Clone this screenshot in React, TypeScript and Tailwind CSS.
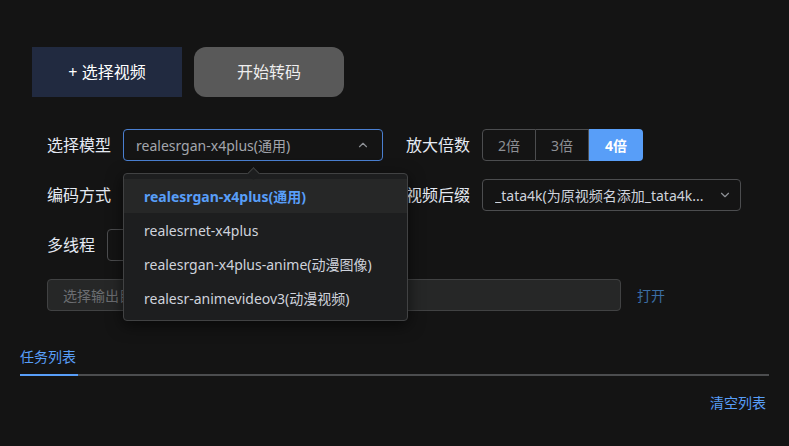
import React from 'react';
import { ChevronUp, ChevronDown } from 'lucide-react';

const font = { fontFamily: '"Noto Sans", "Noto Sans CJK SC", sans-serif' };

const models = [
  'realesrgan-x4plus(通用)',
  'realesrnet-x4plus',
  'realesrgan-x4plus-anime(动漫图像)',
  'realesr-animevideov3(动漫视频)',
];

function Label({ children }: { children: React.ReactNode }) {
  return <span className="mr-3 text-[16px] leading-8 text-[#e5eaf3] whitespace-nowrap">{children}</span>;
}

export default function App() {
  return (
    <div className="relative h-[446px] w-full overflow-hidden bg-[#141414]" style={font}>
      <div className="flex gap-3 pl-8 pt-[47px]">
        <button className="h-[50px] w-[150px] bg-[#212a40] text-[16px] text-white">+ 选择视频</button>
        <button className="h-[50px] w-[150px] rounded-xl bg-[#595959] text-[16px] text-[#eeeeee]">开始转码</button>
      </div>

      <div className="relative mt-8 flex flex-col gap-[18px] pl-[47px]">
        {/* row 1 */}
        <div className="flex items-center">
          <Label>选择模型</Label>
          <div className="flex h-8 w-[260px] items-center justify-between rounded border border-[#4a7fd0] px-3 text-[14px] text-[#a3a6ad]">
            <span>realesrgan-x4plus(通用)</span>
            <ChevronUp className="h-[14px] w-[14px] text-[#8d9095]" />
          </div>
          <span className="ml-[23px]"><Label>放大倍数</Label></span>
          <div className="flex h-8 text-[14px]">
            <span className="flex w-[54px] items-center justify-center rounded-l border border-[#4c4d4f] text-[#8d9095]">2倍</span>
            <span className="flex w-[53px] items-center justify-center border-y border-r border-[#4c4d4f] text-[#8d9095]">3倍</span>
            <span className="flex w-[54px] items-center justify-center rounded-r bg-[#589ef8] font-bold text-white">4倍</span>
          </div>
        </div>

        {/* row 2 */}
        <div className="flex items-center">
          <Label>编码方式</Label>
          <div className="flex h-8 w-[260px] items-center justify-end rounded border border-[#4c4d4f] px-3">
            <ChevronDown className="h-[14px] w-[14px] text-[#8d9095]" />
          </div>
          <span className="ml-[23px]"><Label>视频后缀</Label></span>
          <div className="flex h-8 w-[259px] items-center justify-between rounded border border-[#4c4d4f] pl-3 pr-[8px] text-[14px] text-[#cfd3dc]">
            <span className="truncate">_tata4k(为原视频名添加_tata4k...</span>
            <ChevronDown className="ml-3 h-[14px] w-[14px] shrink-0 text-[#8d9095]" />
          </div>
        </div>

        {/* row 3 */}
        <div className="flex items-center">
          <Label>多线程</Label>
          <div className="flex h-8 w-[150px] items-center rounded border border-[#4c4d4f] px-3" />
        </div>

        {/* row 4 */}
        <div className="flex items-center">
          <div className="flex h-8 w-[574px] items-center rounded border border-[#414243] bg-[#262727] px-[15px] text-[14px] text-[#6c6e72]">
            选择输出目录...
          </div>
          <span className="ml-4 text-[14px] text-[#3b6ea5]">打开</span>
        </div>

        {/* model dropdown */}
        <div className="absolute left-[123px] top-[44px] w-[285px] rounded border border-[#414243] bg-[#1d1e1f] py-[5px] shadow-[0_4px_16px_rgba(0,0,0,0.6)]">
          <div className="absolute -top-[5px] left-[125px] h-[9px] w-[9px] rotate-45 border-l border-t border-[#414243] bg-[#1d1e1f]" />
          {models.map((m, i) => (
            <div
              key={m}
              className={
                'flex h-[34px] items-center px-5 text-[14px] ' +
                (i === 0 ? 'bg-[#262727] font-bold text-[#589ef8]' : 'text-[#cfd3dc]')
              }
            >
              {m}
            </div>
          ))}
        </div>
      </div>

      <div className="mx-5 mt-[36px]">
        <div className="flex">
          <div className="flex flex-col">
            <span className="text-[14px] leading-5 text-[#589ef8]">任务列表</span>
            <div className="mt-[7px] h-[2px] w-[58px] bg-[#589ef8]" />
          </div>
          <div className="mt-auto h-[2px] flex-1 bg-[#4c4d4f]" />
        </div>
        <div className="mt-4 flex justify-end pr-[3px]">
          <span className="text-[14px] text-[#589ef8]">清空列表</span>
        </div>
      </div>
    </div>
  );
}
